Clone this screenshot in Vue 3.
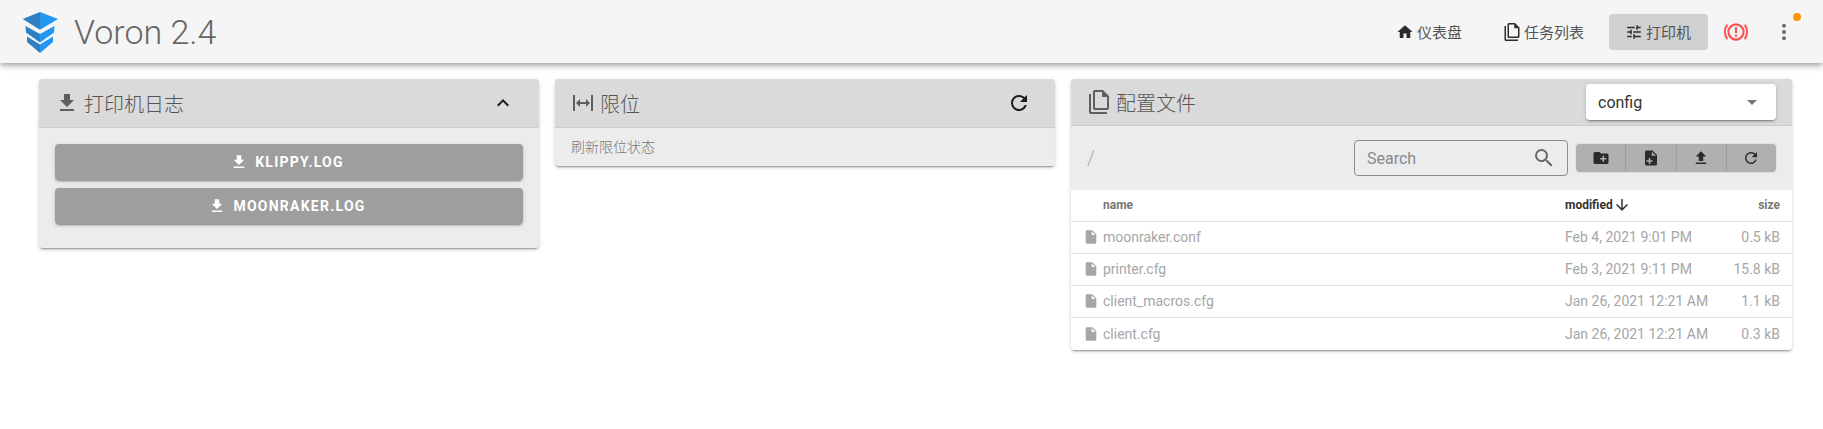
<script setup>
const icons = {
  home: 'M10 20v-6h4v6h5v-8h3L12 3 2 12h3v8z',
  files: 'M16,0H8C6.9,0 6,0.9 6,2V18C6,19.1 6.9,20 8,20H20C21.1,20 22,19.1 22,18V6L16,0M20,18H8V2H15V7H20V18M4,4V22H20V24H4C2.9,24 2,23.1 2,22V4H4Z',
  tune: 'M3 17v2h6v-2H3zM3 5v2h10V5H3zm10 16v-2h8v-2h-8v-2h-2v6h2zM7 9v2H3v2h4v2h2V9H7zm14 4v-2H11v2h10zm-6-4h2V7h4V5h-4V3h-2v6z',
  download: 'M5 20h14v-2H5v2zM19 9h-4V3H9v6H5l7 7 7-7z',
  up: 'M7.41 15.41L12 10.83l4.59 4.58L18 14l-6-6-6 6z',
  expand: 'M9,11H15V8L19,12L15,16V13H9V16L5,12L9,8V11M2,20V4H4V20H2M20,20V4H22V20H20Z',
  refresh: 'M17.65,6.35C16.2,4.9 14.21,4 12,4A8,8 0 0,0 4,12A8,8 0 0,0 12,20C15.73,20 18.84,17.45 19.73,14H17.65C16.83,16.33 14.61,18 12,18A6,6 0 0,1 6,12A6,6 0 0,1 12,6C13.66,6 15.14,6.69 16.22,7.78L13,11H20V4L17.65,6.35Z',
  folderPlus: 'M20,6H12L10,4H4A2,2 0 0,0 2,6V18A2,2 0 0,0 4,20H20A2,2 0 0,0 22,18V8A2,2 0 0,0 20,6M19,14H16V17H14V14H11V12H14V9H16V12H19V14Z',
  filePlus: 'M13,9H18.5L13,3.5V9M6,2H14L20,8V20A2,2 0 0,1 18,22H6C4.89,22 4,21.1 4,20V4C4,2.89 4.89,2 6,2M11,15V12H9V15H6V17H9V20H11V17H14V15H11Z',
  upload: 'M9 16h6v-6h4l-7-7-7 7h4zm-4 2h14v2H5z',
  search: 'M9.5,3A6.5,6.5 0 0,1 16,9.5C16,11.11 15.41,12.59 14.44,13.73L14.71,14H15.5L20.5,19L19,20.5L14,15.5V14.71L13.73,14.44C12.59,15.41 11.11,16 9.5,16A6.5,6.5 0 0,1 3,9.5A6.5,6.5 0 0,1 9.5,3M9.5,5C7,5 5,7 5,9.5C5,12 7,14 9.5,14C12,14 14,12 14,9.5C14,7 12,5 9.5,5Z',
  file: 'M13,9V3.5L18.5,9M6,2C4.89,2 4,2.89 4,4V20A2,2 0 0,0 6,22H18A2,2 0 0,0 20,20V8L14,2H6Z',
  arrowDown: 'M11,4H13V16L18.5,10.5L19.92,11.92L12,19.84L4.08,11.92L5.5,10.5L11,16V4Z'
}
const nav = [
  { label: '仪表盘', icon: icons.home },
  { label: '任务列表', icon: icons.files },
  { label: '打印机', icon: icons.tune, active: true }
]
const logs = ['KLIPPY.LOG', 'MOONRAKER.LOG']
const tools = [icons.folderPlus, icons.filePlus, icons.upload, icons.refresh]
const files = [
  { name: 'moonraker.conf', modified: 'Feb 4, 2021 9:01 PM', size: '0.5 kB' },
  { name: 'printer.cfg', modified: 'Feb 3, 2021 9:11 PM', size: '15.8 kB' },
  { name: 'client_macros.cfg', modified: 'Jan 26, 2021 12:21 AM', size: '1.1 kB' },
  { name: 'client.cfg', modified: 'Jan 26, 2021 12:21 AM', size: '0.3 kB' }
]
</script>

<template>
  <div class="page">
    <header class="bar">
      <svg class="logo" viewBox="22 10 37 43" width="37" height="43">
        <polygon points="40,11 40,28.7 22.7,18" fill="#2f7fc1" />
        <polygon points="40,11 40,28.7 58,18" fill="#2196f3" />
        <polygon points="25.5,25 40,33 40,41.5 26,31.5" fill="#2f7fc1" />
        <polygon points="54.5,25 40,33 40,41.5 54,31.5" fill="#2196f3" />
        <polygon points="27,35.5 40,43.5 40,52 27,41" fill="#2f7fc1" />
        <polygon points="53,35.5 40,43.5 40,52 53,41" fill="#2196f3" />
      </svg>
      <div class="brand">Voron 2.4</div>
      <nav class="nav">
        <div v-for="n in nav" :key="n.label" class="nav-btn" :class="{ active: n.active }">
          <svg class="ic18" viewBox="0 0 24 24"><path :d="n.icon" /></svg>
          <span>{{ n.label }}</span>
        </div>
      </nav>
      <div class="round alert">
        <svg viewBox="0 0 24 24" width="26" height="26">
          <circle cx="12" cy="12" r="7" fill="none" stroke="#ff5252" stroke-width="2" />
          <rect x="11" y="7.6" width="2" height="5.6" fill="#ff5252" />
          <rect x="11" y="14.4" width="2" height="2" fill="#ff5252" />
          <path d="M4 5.5a10.5 10.5 0 0 0 0 13M20 5.5a10.5 10.5 0 0 1 0 13" fill="none" stroke="#ff5252" stroke-width="1.9" />
        </svg>
      </div>
      <div class="round dots">
        <svg viewBox="0 0 24 24" width="24" height="24" fill="#6e6e6e">
          <circle cx="12" cy="5.8" r="2" /><circle cx="12" cy="12" r="2" /><circle cx="12" cy="18.2" r="2" />
        </svg>
        <span class="badge"></span>
      </div>
    </header>

    <main class="main">
      <section class="card">
        <div class="head">
          <svg class="ic24 soft" viewBox="0 0 24 24"><path :d="icons.download" /></svg>
          <span class="title">打印机日志</span>
          <svg class="ic24 end" viewBox="0 0 24 24"><path :d="icons.up" /></svg>
        </div>
        <div class="logs">
          <div v-for="l in logs" :key="l" class="log-btn">
            <svg class="ic18 white" viewBox="0 0 24 24"><path :d="icons.download" /></svg>
            <span>{{ l }}</span>
          </div>
        </div>
      </section>

      <section class="card">
        <div class="head">
          <svg class="ic24 soft" viewBox="0 0 24 24"><path :d="icons.expand" /></svg>
          <span class="title">限位</span>
          <svg class="ic24 end" viewBox="0 0 24 24"><path :d="icons.refresh" /></svg>
        </div>
        <div class="hint">刷新限位状态</div>
      </section>

      <section class="card">
        <div class="head compact">
          <svg class="ic24 soft" viewBox="0 0 24 24"><path :d="icons.files" /></svg>
          <span class="title">配置文件</span>
          <div class="select">
            <span>config</span>
            <i class="caret"></i>
          </div>
        </div>
        <div class="toolbar">
          <span class="crumb">/</span>
          <div class="search">
            <span>Search</span>
            <svg viewBox="0 0 24 24" width="24" height="24"><path :d="icons.search" fill="#666" /></svg>
          </div>
          <div class="group">
            <div v-for="(t, i) in tools" :key="i" class="tool">
              <svg class="ic18" viewBox="0 0 24 24"><path :d="t" /></svg>
            </div>
          </div>
        </div>
        <div class="table">
          <div class="row th">
            <span class="name-col">name</span>
            <span class="sorted">modified
              <svg viewBox="0 0 24 24" width="18" height="18"><path :d="icons.arrowDown" /></svg>
            </span>
            <span class="num">size</span>
          </div>
          <div v-for="f in files" :key="f.name" class="row td">
            <svg viewBox="0 0 24 24" width="16" height="16"><path :d="icons.file" fill="#a6a6a6" /></svg>
            <span>{{ f.name }}</span>
            <span>{{ f.modified }}</span>
            <span class="num">{{ f.size }}</span>
          </div>
        </div>
      </section>
    </main>
  </div>
</template>

<style>
html, body { margin: 0; background: #fff; }
</style>

<style scoped>
.page {
  font-family: Roboto, "Noto Sans CJK SC", sans-serif;
  color: #555;
  min-height: 429px;
  background: #fff;
  overflow: hidden;
}
.bar {
  height: 63px;
  background: #f5f5f5;
  display: flex;
  align-items: center;
  padding: 0 21px 0 22px;
  box-sizing: border-box;
  box-shadow: 0 2px 4px -1px rgba(0,0,0,.2), 0 4px 5px 0 rgba(0,0,0,.14), 0 1px 10px 0 rgba(0,0,0,.12);
}
.logo { flex: none; margin-top: 1px; }
.brand {
  margin-left: 15px;
  font-size: 34px;
  font-weight: 300;
  color: #666;
}
.nav { margin-left: auto; display: flex; gap: 8px; }
.nav-btn {
  display: flex;
  align-items: center;
  gap: 3px;
  height: 36px;
  padding: 0 17px 0 16px;
  font-size: 15px;
  color: #555;
  border-radius: 4px;
}
.nav-btn.active { background: #d0d0d0; }
.ic18 { width: 18px; height: 18px; fill: #2b2b2b; flex: none; }
.ic18.white { fill: #fff; }
.ic24 { width: 24px; height: 24px; fill: #1e1e1e; flex: none; }
.ic24.soft { fill: #5f5f5f; }
.ic24.end { margin-left: auto; }
.round {
  width: 36px;
  height: 36px;
  display: flex;
  align-items: center;
  justify-content: center;
  position: relative;
}
.alert { margin-left: 10px; }
.dots { margin-left: 12px; }
.badge {
  position: absolute;
  top: -1px;
  right: 1px;
  width: 8px;
  height: 8px;
  border-radius: 50%;
  background: #ff9800;
}
.main {
  display: grid;
  grid-template-columns: 500px 500px 1fr;
  gap: 16px;
  padding: 16px 31px 0 39px;
  align-items: start;
}
.card {
  background: #ececec;
  border-radius: 4px;
  overflow: hidden;
  box-shadow: 0 3px 1px -2px rgba(0,0,0,.2), 0 2px 2px 0 rgba(0,0,0,.14), 0 1px 5px 0 rgba(0,0,0,.12);
}
.head {
  height: 49px;
  box-sizing: border-box;
  display: flex;
  align-items: center;
  padding: 0 24px 0 16px;
  background: #dadada;
  border-bottom: 1px solid #cdcdcd;
}
.head.compact { height: 47px; padding-right: 16px; }
.title {
  margin-left: 5px;
  font-size: 20px;
  font-weight: 300;
  color: #555;
}
.logs {
  display: flex;
  flex-direction: column;
  gap: 8px;
  padding: 16px 16px 24px;
}
.log-btn {
  height: 36px;
  border-radius: 4px;
  background: #9e9e9e;
  color: #fff;
  display: flex;
  align-items: center;
  justify-content: center;
  gap: 7px;
  padding-right: 4px;
  font-size: 14px;
  font-weight: 700;
  letter-spacing: 1.25px;
  box-shadow: 0 3px 1px -2px rgba(0,0,0,.2), 0 2px 2px 0 rgba(0,0,0,.14), 0 1px 5px 0 rgba(0,0,0,.12);
}
.hint {
  height: 38px;
  box-sizing: border-box;
  display: flex;
  align-items: center;
  padding: 0 0 3px 16px;
  font-size: 14px;
  font-weight: 300;
  color: #777;
}
.select {
  margin-left: auto;
  width: 190px;
  height: 36px;
  box-sizing: border-box;
  padding: 0 19px 0 12px;
  display: flex;
  align-items: center;
  justify-content: space-between;
  background: #fff;
  border-radius: 4px;
  font-size: 16px;
  color: #333;
  box-shadow: 0 3px 1px -2px rgba(0,0,0,.2), 0 2px 2px 0 rgba(0,0,0,.14), 0 1px 5px 0 rgba(0,0,0,.12);
}
.caret {
  width: 0;
  height: 0;
  border-left: 5px solid transparent;
  border-right: 5px solid transparent;
  border-top: 5px solid #777;
}
.toolbar {
  height: 64px;
  display: flex;
  align-items: center;
  padding: 0 16px;
}
.crumb {
  font-size: 20px;
  font-weight: 300;
  color: #aaa;
  margin-right: auto;
}
.search {
  width: 214px;
  height: 36px;
  box-sizing: border-box;
  border: 1px solid #8c8c8c;
  border-radius: 4px;
  display: flex;
  align-items: center;
  justify-content: space-between;
  padding: 0 11px 0 12px;
  font-size: 16px;
  color: #888;
}
.group {
  margin-left: 8px;
  width: 200px;
  height: 28px;
  display: flex;
  background: #b0b0b0;
  border-radius: 4px;
  overflow: hidden;
  box-shadow: 0 0 0 1px rgba(0,0,0,.05);
}
.tool {
  flex: 1;
  display: flex;
  align-items: center;
  justify-content: center;
  border-left: 1px solid #9d9d9d;
}
.tool:first-child { border-left: 0; }
.table { background: #fff; }
.row {
  display: grid;
  grid-template-columns: 16px 1fr 156px 55px;
  column-gap: 4px;
  align-items: center;
  height: 32px;
  box-sizing: border-box;
  padding: 0 12px 1px;
  border-bottom: 1px solid #e2e2e2;
}
.row:last-child { border-bottom: 0; }
.td { font-size: 14px; color: #a6a6a6; }
.th { font-size: 12px; font-weight: 700; color: #777; padding-bottom: 2px; }
.name-col { grid-column: 2; }
.sorted { display: flex; align-items: center; color: #333; }
.sorted svg { fill: #333; }
.num { text-align: right; }
</style>
